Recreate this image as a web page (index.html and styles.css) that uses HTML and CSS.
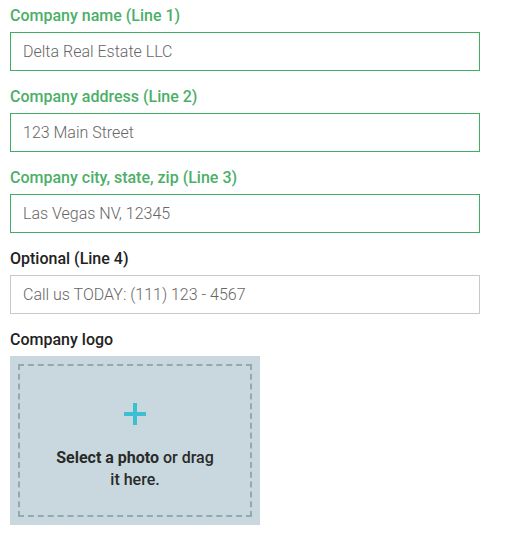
FILE: index.html
```html
<!DOCTYPE html>
<html>
<head>
<meta charset="utf-8">
<link rel="stylesheet" href="styles.css">
</head>
<body>
<form class="form">
  <div class="field">
    <label class="label label-ok">Company name (Line 1)</label>
    <div class="input input-ok">Delta Real Estate LLC</div>
  </div>
  <div class="field">
    <label class="label label-ok">Company address (Line 2)</label>
    <div class="input input-ok">123 Main Street</div>
  </div>
  <div class="field">
    <label class="label label-ok">Company city, state, zip (Line 3)</label>
    <div class="input input-ok">Las Vegas NV, 12345</div>
  </div>
  <div class="field">
    <label class="label">Optional (Line 4)</label>
    <div class="input">Call us TODAY: (111) 123 - 4567</div>
  </div>
  <div class="field">
    <label class="label">Company logo</label>
    <div class="drop">
      <div class="drop-inner">
        <svg class="plus" width="22" height="22" viewBox="0 0 22 22"><path d="M11 0v22M0 11h22" stroke="#3cbfd2" stroke-width="4" fill="none"/></svg>
        <p class="drop-text"><strong>Select a photo</strong> or drag<br>it here.</p>
      </div>
    </div>
  </div>
</form>
</body>
</html>
```
FILE: styles.css
```css
* { box-sizing: border-box; }
body {
  margin: 0;
  padding: 6px 10px 0 10px;
  background: #fff;
  font-family: Roboto, "Noto Sans", sans-serif;
}
.form { display: flex; flex-direction: column; gap: 16px; width: 470px; }
.field { display: flex; flex-direction: column; gap: 6px; }
.label {
  font-size: 16px;
  line-height: 20px;
  font-weight: 500;
  color: #222;
}
.label-ok { color: #4caf68; }
.input {
  height: 39px;
  border: 1px solid #c9c9c9;
  padding: 0 12px;
  display: flex;
  align-items: center;
  font-size: 16px;
  font-weight: 300;
  color: #666;
}
.input-ok { border-color: #3fae62; }
.drop {
  width: 250px;
  height: 169px;
  background: #c8d8de;
  padding: 8px;
}
.drop-inner {
  height: 100%;
  border: 2px dashed #93a9ab;
  display: flex;
  flex-direction: column;
  align-items: center;
  padding-top: 37px;
}
.plus { display: block; margin-bottom: 22px; }
.drop-text {
  margin: 0;
  text-align: center;
  font-size: 16px;
  line-height: 22px;
  font-weight: 500;
  color: #2a2a2a;
}
.drop-text strong { font-weight: 700; }
```
